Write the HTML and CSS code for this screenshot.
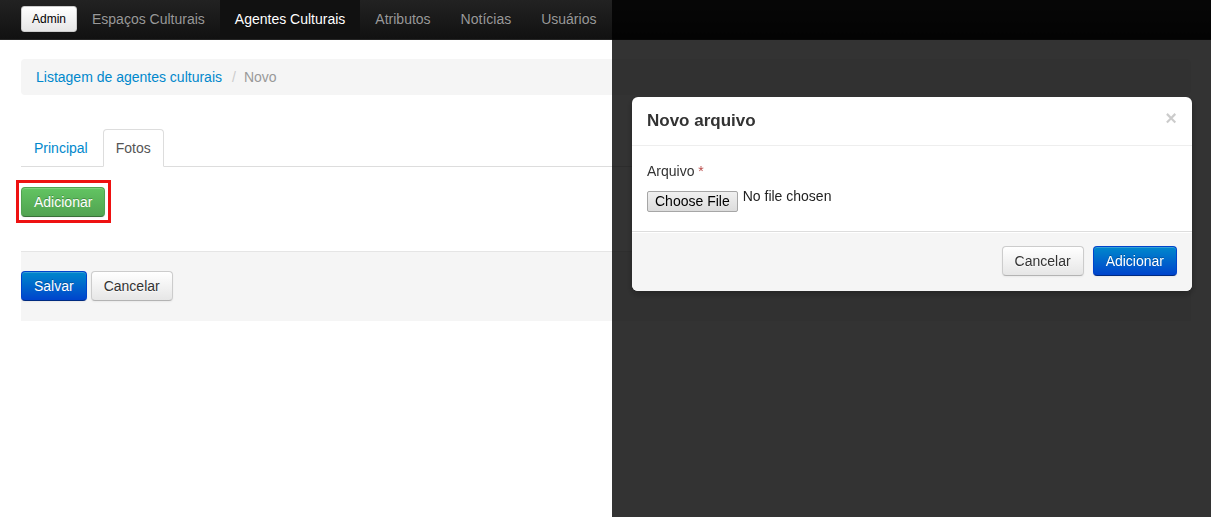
FILE: index.html
```html
<!DOCTYPE html>
<html lang="pt">
<head>
<meta charset="utf-8">
<title>Novo agente cultural</title>
<link rel="stylesheet" href="styles.css">
</head>
<body>
<div class="navbar">
  <div class="navbar-inner">
    <a class="brand" href="#">Admin</a>
    <ul class="nav">
      <li><a href="#">Espaços Culturais</a></li>
      <li class="active"><a href="#">Agentes Culturais</a></li>
      <li><a href="#">Atributos</a></li>
      <li><a href="#">Notícias</a></li>
      <li><a href="#">Usuários</a></li>
    </ul>
  </div>
</div>

<div class="container">
  <ul class="breadcrumb">
    <li><a href="#">Listagem de agentes culturais</a><span class="divider">/</span></li>
    <li class="current">Novo</li>
  </ul>

  <ul class="nav-tabs">
    <li><a href="#">Principal</a></li>
    <li class="active"><a href="#">Fotos</a></li>
  </ul>

  <div class="tab-content">
    <span class="highlight"><button class="btn btn-success" type="button">Adicionar</button></span>
  </div>

  <div class="form-actions">
    <button class="btn btn-primary" type="button">Salvar</button>
    <button class="btn" type="button">Cancelar</button>
  </div>
</div>

<div class="backdrop"></div>

<div class="modal">
  <div class="modal-header">
    <button class="close" type="button">×</button>
    <h3>Novo arquivo</h3>
  </div>
  <div class="modal-body">
    <label class="control-label">Arquivo <span class="req">*</span></label>
    <div class="file-row">
      <span class="file-btn">Choose File</span><span class="file-name">No file chosen</span>
    </div>
  </div>
  <div class="modal-footer">
    <button class="btn" type="button">Cancelar</button>
    <button class="btn btn-primary" type="button">Adicionar</button>
  </div>
</div>
</body>
</html>
```

FILE: styles.css
```css
* { box-sizing: border-box; }

html, body {
  margin: 0;
  padding: 0;
  height: 100%;
}

body {
  font-family: "Liberation Sans", Arial, Helvetica, sans-serif;
  font-size: 14px;
  line-height: 20px;
  color: #333;
  background: #fff;
  overflow: hidden;
}

a { text-decoration: none; color: #0088cc; }

/* Navbar */
.navbar-inner {
  height: 40px;
  background: linear-gradient(to bottom, #222 0%, #111 100%);
  border-bottom: 1px solid #252525;
  display: flex;
  align-items: flex-start;
  padding-left: 21px;
}

.brand {
  display: block;
  margin-top: 6px;
  width: 56px;
  height: 26px;
  line-height: 24px;
  text-align: center;
  font-size: 12px;
  color: #000;
  background: linear-gradient(to bottom, #fff 0%, #e6e6e6 100%);
  border: 1px solid #ccc;
  border-radius: 3px;
}

.nav {
  list-style: none;
  margin: 0;
  padding: 0;
  display: flex;
}

.nav li a {
  display: block;
  padding: 9px 15px 10px;
  line-height: 20px;
  color: #999;
  text-shadow: 0 -1px 0 rgba(0,0,0,0.25);
}

.nav li.active a {
  color: #fff;
  background: #111;
}

/* Content */
.container {
  padding: 0 20px 0 21px;
}

.breadcrumb {
  list-style: none;
  margin: 19px 0 34px;
  padding: 8px 15px;
  background: #f5f5f5;
  border-radius: 4px;
  display: flex;
}

.breadcrumb .divider {
  padding: 0 8px 0 10px;
  color: #ccc;
}

.breadcrumb .current { color: #999; }

.nav-tabs {
  list-style: none;
  margin: 0 0 20px;
  padding: 0;
  display: flex;
  border-bottom: 1px solid #ddd;
}

.nav-tabs li { margin-bottom: -1px; margin-right: 2px; }

.nav-tabs li a {
  display: block;
  padding: 8px 12px;
  line-height: 20px;
  border: 1px solid transparent;
  border-radius: 4px 4px 0 0;
}

.nav-tabs li.active a {
  color: #555;
  background: #fff;
  border-color: #ddd #ddd transparent;
}

.tab-content {
  height: 64px;
}

.highlight {
  position: relative;
  display: inline-block;
}

.highlight::after {
  content: "";
  position: absolute;
  left: -5px;
  top: -7px;
  right: -6px;
  bottom: -6px;
  border: 3px solid #ee1111;
}

/* Buttons */
.btn {
  display: inline-block;
  font-family: inherit;
  font-size: 14px;
  line-height: 20px;
  padding: 4px 12px;
  margin: 0;
  color: #333;
  text-shadow: 0 1px 1px rgba(255,255,255,0.75);
  background: linear-gradient(to bottom, #fff 0%, #e6e6e6 100%);
  border: 1px solid #ccc;
  border-bottom-color: #b3b3b3;
  border-radius: 4px;
  box-shadow: inset 0 1px 0 rgba(255,255,255,0.2), 0 1px 2px rgba(0,0,0,0.05);
  cursor: pointer;
}

.btn-success {
  color: #fff;
  text-shadow: 0 -1px 0 rgba(0,0,0,0.25);
  background: linear-gradient(to bottom, #62c462 0%, #51a351 100%);
  border-color: #51a351 #51a351 #387038;
}

.btn-primary {
  color: #fff;
  text-shadow: 0 -1px 0 rgba(0,0,0,0.25);
  background: linear-gradient(to bottom, #0088cc 0%, #0044cc 100%);
  border-color: #0044cc #0044cc #002a80;
}

.form-actions {
  padding: 19px 0 20px;
  background: #f5f5f5;
  border-top: 1px solid #e5e5e5;
  display: flex;
  gap: 4px;
}

/* Backdrop */
.backdrop {
  position: fixed;
  top: 0;
  bottom: 0;
  left: 612px;
  right: 0;
  background: rgba(0,0,0,0.8);
}

/* Modal */
.modal {
  position: fixed;
  top: 97px;
  left: 632px;
  width: 560px;
  background: #fff;
  border-radius: 6px;
  box-shadow: 0 3px 7px rgba(0,0,0,0.3);
}

.modal-header {
  padding: 9px 15px;
  border-bottom: 1px solid #eee;
}

.modal-header h3 {
  margin: 0;
  font-size: 17px;
  line-height: 30px;
  font-weight: bold;
  color: #333;
}

.close {
  float: right;
  margin-top: 2px;
  padding: 0;
  border: 0;
  background: transparent;
  font-family: inherit;
  font-size: 20px;
  font-weight: bold;
  line-height: 20px;
  color: #000;
  opacity: 0.2;
  cursor: pointer;
}

.modal-body {
  padding: 15px 15px 19px;
}

.control-label {
  display: block;
  margin-bottom: 10px;
}

.req { color: #b94a48; }

.file-row {
  display: flex;
  align-items: flex-start;
}

.file-btn {
  display: inline-block;
  height: 21px;
  padding: 0 7px;
  line-height: 19px;
  font-size: 14px;
  color: #000;
  background: linear-gradient(to bottom, #f0f0f0 0%, #dcdcdc 100%);
  border: 1px solid #a6a6a6;
  border-radius: 2px;
}

.file-name {
  margin-left: 5px;
  margin-top: -5px;
  line-height: 20px;
  color: #222;
}

.modal-footer {
  padding: 14px 15px 15px;
  background: #f5f5f5;
  border-top: 1px solid #ddd;
  border-radius: 0 0 6px 6px;
  display: flex;
  justify-content: flex-end;
  gap: 9px;
  box-shadow: inset 0 1px 0 #fff;
}
```
